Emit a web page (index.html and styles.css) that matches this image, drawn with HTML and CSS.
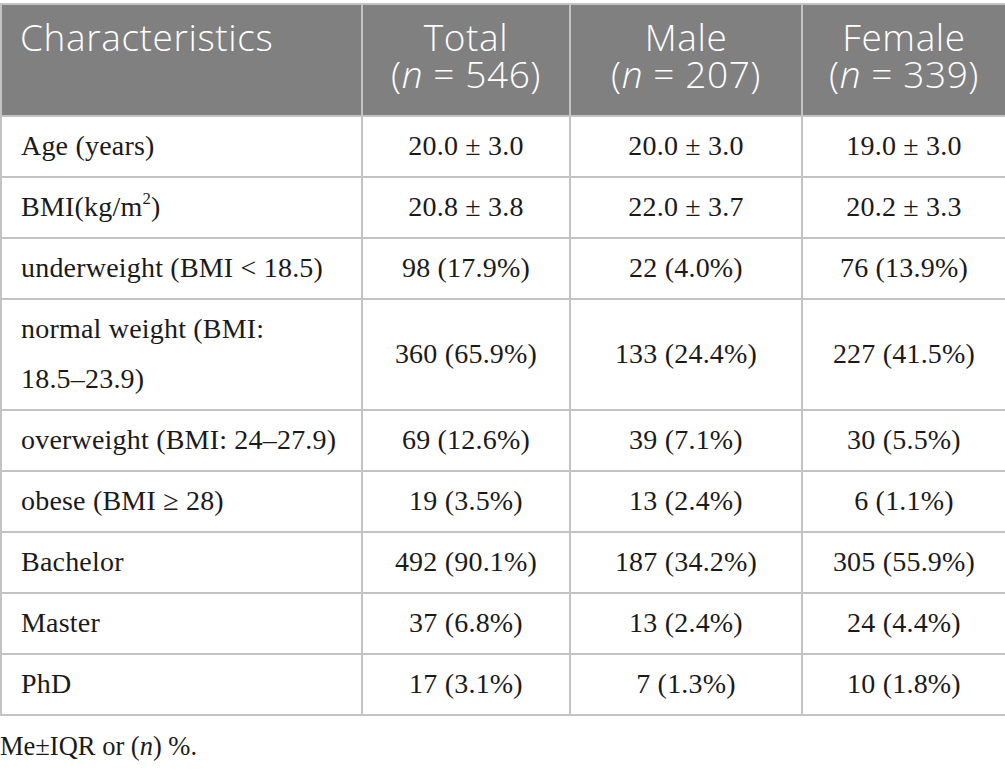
FILE: index.html
```html
<!DOCTYPE html>
<html>
<head>
<meta charset="utf-8">
<link rel="stylesheet" href="styles.css">
</head>
<body>
<table class="tbl">
  <colgroup>
    <col class="c1"><col class="c2"><col class="c3"><col class="c4">
  </colgroup>
  <thead>
    <tr>
      <th class="left">Characteristics</th>
      <th><span class="hl">Total</span><span class="hl">(<i>n</i> = 546)</span></th>
      <th><span class="hl">Male</span><span class="hl">(<i>n</i> = 207)</span></th>
      <th><span class="hl">Female</span><span class="hl">(<i>n</i> = 339)</span></th>
    </tr>
  </thead>
  <tbody>
    <tr><td class="left">Age (years)</td><td>20.0 ± 3.0</td><td>20.0 ± 3.0</td><td>19.0 ± 3.0</td></tr>
    <tr><td class="left">BMI(kg/m<sup>2</sup>)</td><td>20.8 ± 3.8</td><td>22.0 ± 3.7</td><td>20.2 ± 3.3</td></tr>
    <tr><td class="left">underweight (BMI &lt; 18.5)</td><td>98 (17.9%)</td><td>22 (4.0%)</td><td>76 (13.9%)</td></tr>
    <tr><td class="left">normal weight (BMI:<br>18.5–23.9)</td><td>360 (65.9%)</td><td>133 (24.4%)</td><td>227 (41.5%)</td></tr>
    <tr><td class="left">overweight (BMI: 24–27.9)</td><td>69 (12.6%)</td><td>39 (7.1%)</td><td>30 (5.5%)</td></tr>
    <tr><td class="left">obese (BMI ≥ 28)</td><td>19 (3.5%)</td><td>13 (2.4%)</td><td>6 (1.1%)</td></tr>
    <tr><td class="left">Bachelor</td><td>492 (90.1%)</td><td>187 (34.2%)</td><td>305 (55.9%)</td></tr>
    <tr><td class="left">Master</td><td>37 (6.8%)</td><td>13 (2.4%)</td><td>24 (4.4%)</td></tr>
    <tr><td class="left">PhD</td><td>17 (3.1%)</td><td>7 (1.3%)</td><td>10 (1.8%)</td></tr>
  </tbody>
</table>
<p class="note">Me±IQR or (<i>n</i>) %.</p>
</body>
</html>
```
FILE: styles.css
```css
html, body {
  margin: 0;
  padding: 0;
  background: #ffffff;
}
body {
  padding-top: 3px;
}
.tbl {
  border-collapse: collapse;
  width: 1005px;
  table-layout: fixed;
  font-family: "Liberation Serif", "Times New Roman", serif;
  font-size: 28px;
  letter-spacing: 0.2px;
  color: #1a1a1a;
}
.c1 { width: 361px; }
.c2 { width: 208px; }
.c3 { width: 232px; }
.c4 { width: 204px; }
.tbl th, .tbl td {
  border: 2px solid #c3c3c3;
  text-align: center;
}
.tbl th {
  background: #808080;
  color: #ffffff;
  font-family: "Open Sans", "Noto Sans", sans-serif;
  font-weight: 300;
  font-size: 37px;
  line-height: 37px;
  letter-spacing: 0.6px;
  padding: 13px 18px 23px;
  vertical-align: top;
}
.tbl th .hl {
  display: block;
  height: 37px;
}
.tbl td {
  line-height: 50px;
  padding: 4px 19px 5px;
  vertical-align: middle;
}
.tbl .left {
  text-align: left;
}
.tbl sup {
  font-size: 60%;
  line-height: 0;
  vertical-align: 0.7em;
}
.note {
  margin: 15px 0 0;
  font-family: "Liberation Serif", "Times New Roman", serif;
  font-size: 26.5px;
  color: #1a1a1a;
}
```
